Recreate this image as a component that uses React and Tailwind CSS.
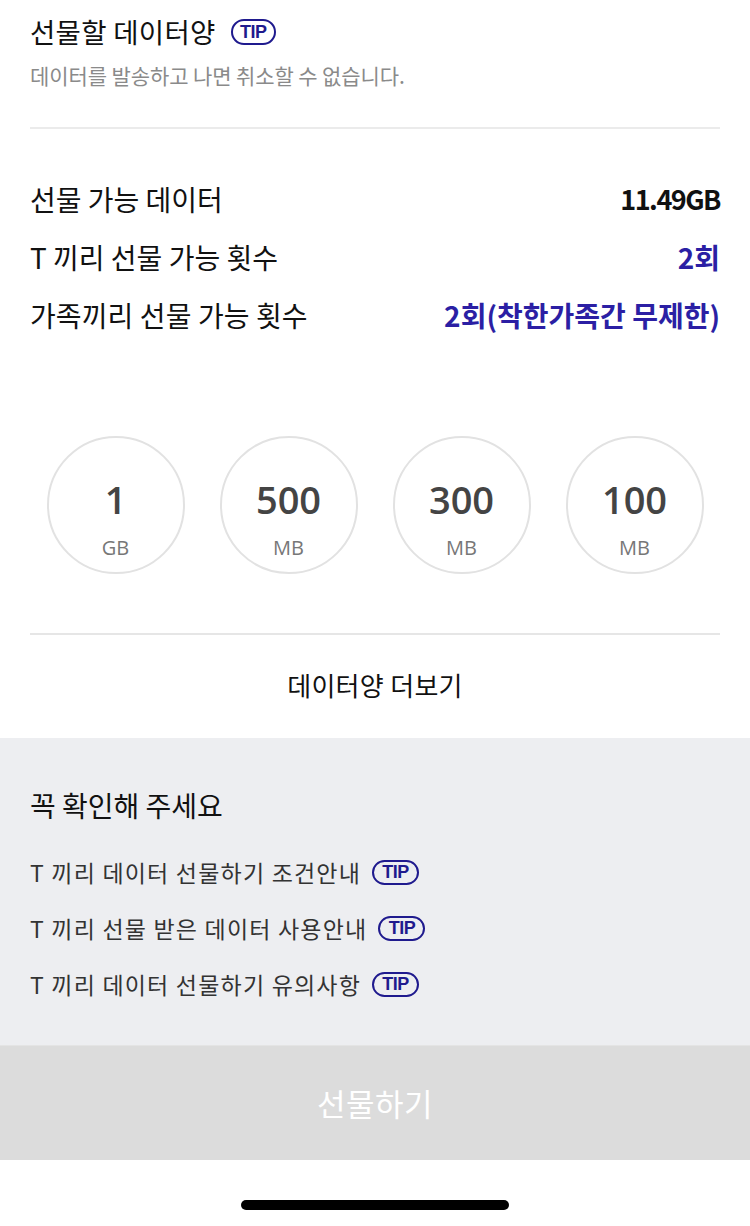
import React from "react";

const kr = { fontFamily: '"Noto Sans CJK KR", "Noto Sans", sans-serif' };

function Tip({ small }) {
  return (
    <span
      className={`inline-flex items-center justify-center rounded-full border-2 border-[#1f1a8e] text-[#1f1a8e] font-bold leading-none tracking-[-0.5px] ${
        small ? "h-[25px] w-[47px] text-[18px]" : "h-[26px] w-[45px] text-[18px]"
      }`}
      style={{ fontFamily: '"Liberation Sans", Arial, sans-serif' }}
    >
      TIP
    </span>
  );
}

const amounts = [
  { n: "1", u: "GB" },
  { n: "500", u: "MB" },
  { n: "300", u: "MB" },
  { n: "100", u: "MB" },
];

const checks = [
  "T 끼리 데이터 선물하기 조건안내",
  "T 끼리 선물 받은 데이터 사용안내",
  "T 끼리 데이터 선물하기 유의사항",
];

export default function App() {
  return (
    <div className="w-[750px] h-[1226px] bg-white flex flex-col" style={kr}>
      {/* Header */}
      <div className="px-[30px] pt-[13px]">
        <div className="flex items-center gap-[15px] h-[38px]">
          <h1 className="text-[27.5px] text-[#111] leading-none tracking-[0.3px]">
            선물할 데이터양
          </h1>
          <Tip />
        </div>
        <p className="mt-[14px] text-[21px] text-[#8a8a8a] leading-none tracking-[-0.1px]">
          데이터를 발송하고 나면 취소할 수 없습니다.
        </p>
        <div className="mt-[41px] h-[2px] bg-[#ebebeb]" />
      </div>

      {/* Info rows */}
      <div className="px-[30px] pt-[52px] flex flex-col gap-[22px]">
        <div className="flex justify-between items-center h-[36px]">
          <span className="text-[28px] text-[#111]">선물 가능 데이터</span>
          <span className="text-[27px] font-bold text-[#111] tracking-[-1.5px]">11.49GB</span>
        </div>
        <div className="flex justify-between items-center h-[36px]">
          <span className="text-[28px] text-[#111]">T 끼리 선물 가능 횟수</span>
          <span className="text-[28px] font-bold text-[#2b1fa4]">2회</span>
        </div>
        <div className="flex justify-between items-center h-[36px]">
          <span className="text-[28px] text-[#111] tracking-[0.1px]">가족끼리 선물 가능 횟수</span>
          <span className="text-[28px] font-bold text-[#2b1fa4]">2회(착한가족간 무제한)</span>
        </div>
      </div>

      {/* Amount circles */}
      <div className="mt-[103px] flex justify-center gap-[35px]">
        {amounts.map((a) => (
          <button
            key={a.n}
            className="w-[138px] h-[138px] rounded-full border-2 border-[#e2e2e2] flex flex-col items-center justify-start pt-[39px]"
            style={{ fontFamily: '"Open Sans", "Noto Sans", sans-serif' }}
          >
            <span className="text-[38px] font-semibold text-[#444] leading-[44px]">{a.n}</span>
            <span className="mt-[15px] text-[20px] text-[#777] leading-[24px]">{a.u}</span>
          </button>
        ))}
      </div>

      <div className="mx-[30px] mt-[59px] h-[2px] bg-[#e6e6e6]" />

      <div className="h-[103px] flex items-center justify-center pb-[4px]">
        <span className="text-[26px] text-[#111] tracking-[0.3px]">데이터양 더보기</span>
      </div>

      {/* Notice */}
      <div className="bg-[#edeef1] h-[307px] px-[30px] pt-[52px]">
        <h2 className="text-[28px] text-[#111] leading-none h-[30px] flex items-center">
          꼭 확인해 주세요
        </h2>
        <ul className="mt-[37px] flex flex-col gap-[26px]">
          {checks.map((c) => (
            <li key={c} className="flex items-center gap-[11px] h-[30px]">
              <span className="text-[23px] text-[#333] tracking-[1.2px]">{c}</span>
              <Tip small />
            </li>
          ))}
        </ul>
      </div>

      {/* Submit */}
      <button className="h-[115px] bg-[#dcdcdc] flex items-center justify-center border-t border-[#e4e4e4]">
        <span className="text-[31px] text-white tracking-[0.5px]">선물하기</span>
      </button>

      {/* Home indicator */}
      <div className="flex-1 flex items-start justify-center pt-[40px]">
        <div className="w-[268px] h-[10px] rounded-full bg-black" />
      </div>
    </div>
  );
}
